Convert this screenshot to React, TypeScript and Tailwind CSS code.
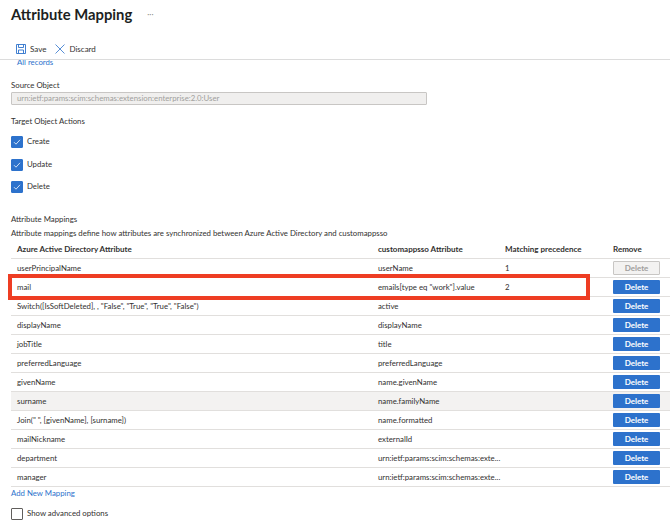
const rows = [
  ["userPrincipalName", "userName", "1"],
  ["mail", 'emails[type eq "work"].value', "2"],
  ['Switch([IsSoftDeleted], , "False", "True", "True", "False")', "active", ""],
  ["displayName", "displayName", ""],
  ["jobTitle", "title", ""],
  ["preferredLanguage", "preferredLanguage", ""],
  ["givenName", "name.givenName", ""],
  ["surname", "name.familyName", ""],
  ['Join(" ", [givenName], [surname])', "name.formatted", ""],
  ["mailNickname", "externalId", ""],
  ["department", "urn:ietf:params:scim:schemas:exte...", ""],
  ["manager", "urn:ietf:params:scim:schemas:exte...", ""],
];

function Check({ on, label, cls }: { on: boolean; label: string; cls: string }) {
  return (
    <div className={`flex h-[12px] items-center gap-[4px] ${cls}`}>
      <span className={`flex h-[12px] w-[12px] items-center justify-center rounded-[1px] border ${on ? "border-[#2d72cc] bg-[#2d72cc]" : "border-[#605e5c] bg-white"}`}>
        {on && (
          <svg width="8" height="8" viewBox="0 0 8 8" fill="none" stroke="#cfe0f5" strokeWidth="1">
            <path d="M1 4.2 3 6.2 7 1.8" />
          </svg>
        )}
      </span>
      <span>{label}</span>
    </div>
  );
}

export default function App() {
  return (
    <div className="relative h-[527px] w-[670px] overflow-hidden bg-white font-['Lato',sans-serif] text-[7.8px] text-[#323130]">
      <div className="flex h-[60px] flex-col border-b border-[#dcdcdc]">
        <div className="flex h-[28px] items-center pl-[11px]">
          <h1 className="text-[14.8px] leading-none font-bold text-[#201f1e]">Attribute Mapping</h1>
          <span className="ml-[15px] text-[8px] leading-none text-[#8a8886]">···</span>
        </div>
        <div className="mt-[15px] flex items-center pl-[16px]">
          <svg width="10" height="10" viewBox="0 0 10 10" fill="none" stroke="#2d72cc" strokeWidth="0.9">
            <path d="M.5.5h9v9h-9zM2.5.5v3h5v-3M2.5 9.5v-3.500h5v3.500" />
          </svg>
          <span className="ml-[4px] text-[8px]">Save</span>
          <svg className="ml-[9px]" width="10" height="10" viewBox="0 0 10 10" fill="none" stroke="#2d72cc" strokeWidth="0.8">
            <path d="M.5.500 9.500 9.500M9.500.500.500 9.500" />
          </svg>
          <span className="ml-[4px] text-[8px]">Discard</span>
        </div>
      </div>
      <div className="h-[467px] overflow-hidden">
        <a className="-mt-[2px] block h-[8px] pl-[17px] leading-[8px] text-[#2d72cc]">All records</a>
        <div className="mt-[13px] pl-[11px] leading-[12px]">Source Object</div>
        <div className="mt-[1px] ml-[11px] flex h-[13px] w-[416px] items-center rounded-[1px] border border-[#c8c6c4] bg-[#f0efee] pl-[5px] text-[#a19f9d]">
          urn:ietf:params:scim:schemas:extension:enterprise:2.0:User
        </div>
        <div className="mt-[10px] pl-[11px] leading-[12px]">Target Object Actions</div>
        <div className="mt-[9px] pl-[11px]">
          <Check on label="Create" cls="" />
          <Check on label="Update" cls="mt-[11px]" />
          <Check on label="Delete" cls="mt-[10px]" />
        </div>
        <div className="mt-[20px] pl-[11px] leading-[12px]">Attribute Mappings</div>
        <div className="mt-[2px] pl-[11px] leading-[12px]">
          Attribute mappings define how attributes are synchronized between Azure Active Directory and customappsso
        </div>
        <div className="ml-[11px]">
          <div className="grid h-[19px] grid-cols-[361px_127px_108px_1fr] items-center pl-[6px] text-[8px] font-bold">
            <span>Azure Active Directory Attribute</span>
            <span>customappsso Attribute</span>
            <span>Matching precedence</span>
            <span>Remove</span>
          </div>
          {rows.map(([source, target, order], i) => (
            <div key={i} className={`grid h-[19px] grid-cols-[361px_127px_108px_1fr] items-center border-t border-[#e1dfdd] pl-[6px] ${source === "surname" ? "bg-[#f3f2f1]" : ""}`}>
              <span className="pt-[1px]">{source}</span>
              <span className="pt-[1px]">{target}</span>
              <span className="pt-[1px]">{order}</span>
              <button className={`-mt-[1px] h-[14px] w-[47px] rounded-[1px] text-center text-[8px] leading-none font-bold ${i === 0 ? "border border-[#c8c6c4] bg-[#f3f2f1] text-[#a19f9d]" : "bg-[#2d72cc] text-white"}`}>
                Delete
              </button>
            </div>
          ))}
          <div className="border-t border-[#e1dfdd]" />
        </div>
        <a className="block pl-[11px] leading-[12px] text-[#2d72cc]">Add New Mapping</a>
        <div className="mt-[9px] pl-[11px]">
          <Check on={false} label="Show advanced options" cls="" />
        </div>
      </div>
      <div className="absolute top-[274px] left-[8px] h-[26px] w-[582px] border-[4px] border-[#ee3d23]" />
    </div>
  );
}
